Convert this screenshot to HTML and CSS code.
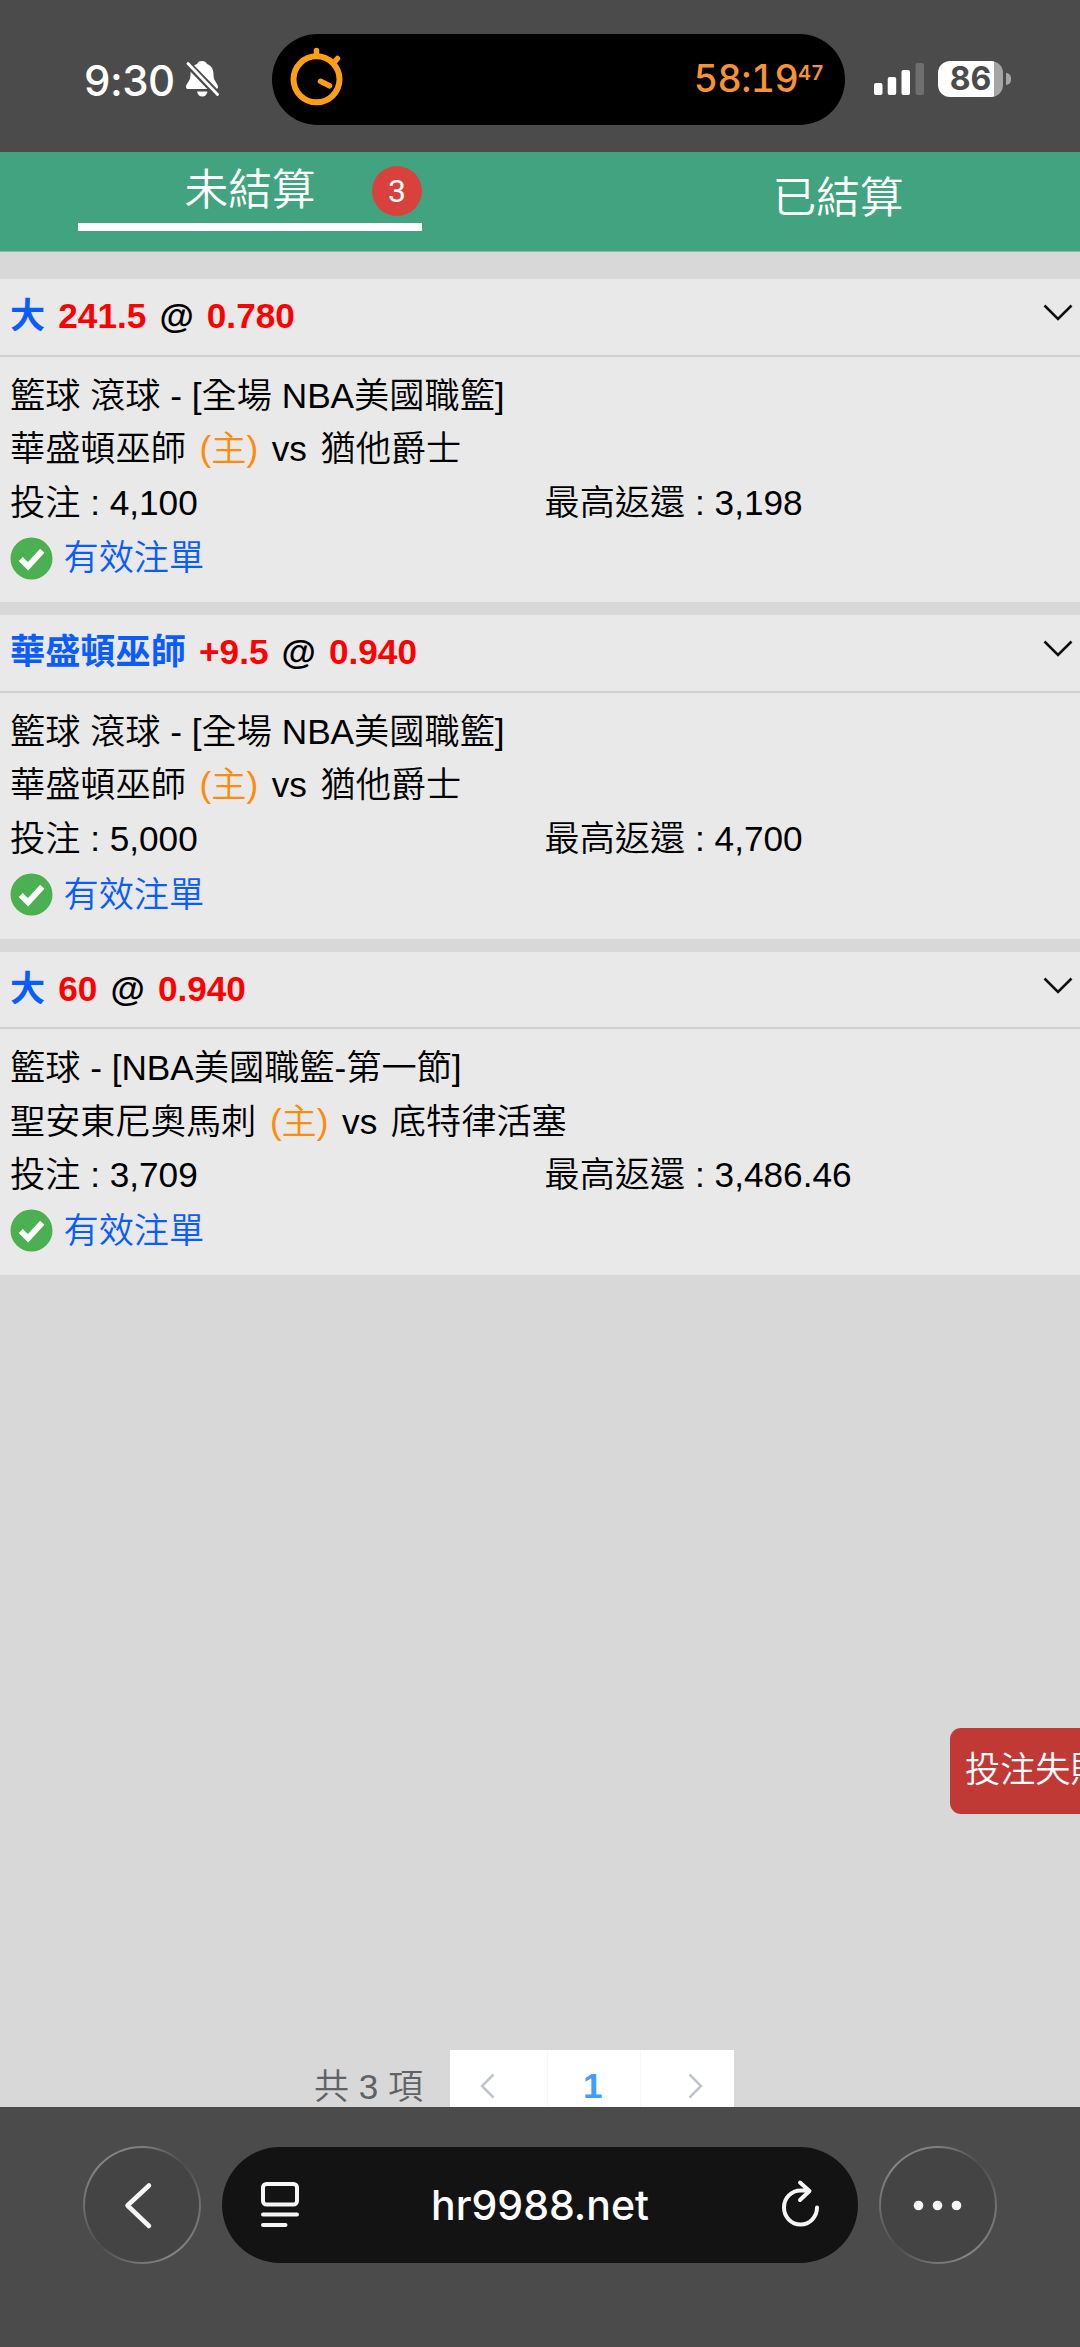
FILE: index.html
```
<!DOCTYPE html>
<html lang="zh-Hant">
<head>
  <meta charset="UTF-8">
  <title>投注記錄</title>
  <meta name="viewport" content="width=device-width, initial-scale=1.0">
  <link rel="stylesheet" href="styles.css">
</head>
<body>

<div class="screen">

  <!-- Status bar -->
  <header class="status-bar">
    <span class="clock">9:30</span>
    <svg class="bell" viewBox="0 0 33 36">
      <path d="M16 0c-3 0-4.500 1.500-5 3-5 2-6.500 6-6.500 10.500 0 7-4.500 9-4.500 12.500 0 1.500 1 2 2 2h28c1 0 2-.500 2-2 0-3.500-4.500-5.500-4.500-12.500C27.500 9 26 5 21 3c-.500-1.500-2-3-5-3z" fill="#fff"/>
      <path d="M11 30.500h10.500c-.500 3-2.500 5-5.200 5s-4.800-2-5.300-5z" fill="#fff"/>
      <path d="M-2 -1L33 35" stroke="#4b4b4b" stroke-width="7"/>
      <path d="M2 2.500L31.500 33.500" stroke="#fff" stroke-width="2.800" stroke-linecap="round"/>
    </svg>
    <div class="island">
      <svg class="stopwatch" viewBox="0 0 54 60">
        <g fill="none" stroke="#fc9f14" stroke-linecap="round">
          <circle cx="26.500" cy="33.300" r="23" stroke-width="6"/>
          <path d="M26.500 10V4.500M44.500 16l3-3.500" stroke-width="5.500"/>
          <path d="M30.500 35.300l9 4.500" stroke-width="5.500"/>
        </g>
      </svg>
      <span class="timer">58:19<small>47</small></span>
    </div>
    <svg class="signal" viewBox="0 0 50 32">
      <g fill="#fff">
        <rect x="0" y="20" width="8.500" height="12" rx="2"/>
        <rect x="13.700" y="14" width="8.500" height="18" rx="2"/>
        <rect x="27.500" y="7" width="8.500" height="25" rx="2"/>
        <rect x="41.500" y="0" width="8.500" height="32" rx="2" opacity=".2"/>
      </g>
    </svg>
    <div class="battery"><span>86</span></div>
    <i class="battery-tip"></i>
  </header>

  <nav class="tabs">
    <div class="tab active">
      <span class="tab-label">未結算<b class="badge">3</b></span>
    </div>
    <div class="tab"><span class="tab-label">已結算</span></div>
  </nav>

  <main class="content">

    <section class="bet">
      <div class="bet-head">
        <p><span class="pick">大</span> <span class="odds">241.5</span> @ <span class="odds">0.780</span></p>
        <svg class="chevron" viewBox="0 0 30 17"><path d="M1.500 1.500L15 15 28.500 1.500"/></svg>
      </div>
      <div class="bet-body">
        <p>籃球 滾球 - [全場 NBA美國職籃]</p>
        <p class="teams">華盛頓巫師 <span class="home">(主)</span> vs 猶他爵士</p>
        <div class="amounts"><p>投注 : 4,100</p><p>最高返還 : 3,198</p></div>
        <div class="state">
          <svg class="check" viewBox="0 0 44 44"><circle cx="22" cy="22" r="21.500"/><path d="M11 22.500l7.500 7.500 14.500-16"/></svg>
          有效注單
        </div>
      </div>
    </section>

    <section class="bet">
      <div class="bet-head">
        <p><span class="pick">華盛頓巫師</span> <span class="odds">+9.5</span> @ <span class="odds">0.940</span></p>
        <svg class="chevron" viewBox="0 0 30 17"><path d="M1.500 1.500L15 15 28.500 1.500"/></svg>
      </div>
      <div class="bet-body">
        <p>籃球 滾球 - [全場 NBA美國職籃]</p>
        <p class="teams">華盛頓巫師 <span class="home">(主)</span> vs 猶他爵士</p>
        <div class="amounts"><p>投注 : 5,000</p><p>最高返還 : 4,700</p></div>
        <div class="state">
          <svg class="check" viewBox="0 0 44 44"><circle cx="22" cy="22" r="21.500"/><path d="M11 22.500l7.500 7.500 14.500-16"/></svg>
          有效注單
        </div>
      </div>
    </section>

    <section class="bet">
      <div class="bet-head">
        <p><span class="pick">大</span> <span class="odds">60</span> @ <span class="odds">0.940</span></p>
        <svg class="chevron" viewBox="0 0 30 17"><path d="M1.500 1.500L15 15 28.500 1.500"/></svg>
      </div>
      <div class="bet-body">
        <p>籃球 - [NBA美國職籃-第一節]</p>
        <p class="teams">聖安東尼奧馬刺 <span class="home">(主)</span> vs 底特律活塞</p>
        <div class="amounts"><p>投注 : 3,709</p><p>最高返還 : 3,486.46</p></div>
        <div class="state">
          <svg class="check" viewBox="0 0 44 44"><circle cx="22" cy="22" r="21.500"/><path d="M11 22.500l7.500 7.500 14.500-16"/></svg>
          有效注單
        </div>
      </div>
    </section>

    <div class="pagination">
      <span class="total">共 3 項</span>
      <div class="pager">
        <span class="prev"><svg viewBox="0 0 15 26"><path d="M13.500 1.500L2 13l11.500 11.500"/></svg></span>
        <span class="num">1</span>
        <span class="next"><svg viewBox="0 0 15 26"><path d="M1.500 1.500L13 13 1.500 24.500"/></svg></span>
      </div>
    </div>

    <div class="toast">投注失敗</div>
  </main>

  <!-- Browser toolbar -->
  <footer class="toolbar">
    <div class="round">
      <svg width="118" height="118" viewBox="0 0 118 118"><path d="M66 39.500L44.500 59.500l21.500 20.500" stroke-width="4.500"/></svg>
    </div>
    <div class="address">
      <svg class="reader" viewBox="0 0 38 46">
        <rect x="2" y="2" width="34" height="20.500" rx="3.500"/>
        <path d="M2 32.500h34M2 43h22.500"/>
      </svg>
      <span>hr9988.net</span>
      <svg class="reload" viewBox="0 0 38 46">
        <path d="M36 25.500a16.500 17 0 1 1-16.500-17h8M19 .500l9.500 8.500-9.500 9"/>
      </svg>
    </div>
    <div class="round">
      <svg width="118" height="118" viewBox="0 0 118 118"><g class="dots"><circle cx="39.500" cy="59.500" r="4.800"/><circle cx="58.500" cy="59.500" r="4.800"/><circle cx="77.500" cy="59.500" r="4.800"/></g></svg>
    </div>
  </footer>

</div>

</body>
</html>
```
FILE: styles.css
```
* {
  box-sizing: border-box;
}

body {
  margin: 0;
  font-family: "Liberation Sans", "Noto Sans CJK TC", sans-serif;
  font-size: 35.2px;
  font-weight: 350;
  color: #000;
}

p {
  margin: 0;
}

svg {
  display: block;
  flex-shrink: 0;
  overflow: visible;
}

.screen {
  width: 1080px;
  height: 2347px;
  display: flex;
  flex-direction: column;
  overflow: hidden;
  background: #d8d8d8;
}

/* status bar */
.status-bar {
  height: 152px;
  flex-shrink: 0;
  display: flex;
  align-items: center;
  padding: 6px 0 0 84px;
  background: #4b4b4b;
  color: #fff;
  font-family: Inter, sans-serif;
}

.clock {
  width: 102px;
  padding-top: 2px;
  font-size: 42px;
  font-weight: 500;
  letter-spacing: -0.5px;
}

.bell {
  width: 33px;
  height: 36px;
  margin-right: 53px;
  overflow: hidden;
}

.island {
  width: 573px;
  height: 91px;
  border-radius: 46px;
  background: #000;
  display: flex;
  align-items: center;
  justify-content: space-between;
  padding: 0 21px 0 18px;
}

.stopwatch {
  width: 54px;
  height: 60px;
  margin-bottom: 7px;
}

.timer {
  display: flex;
  align-items: flex-start;
  font-size: 37.5px;
  font-weight: 450;
  line-height: 50px;
  letter-spacing: -0.6px;
  font-variant-numeric: tabular-nums;
  color: #f69335;
}

.timer small {
  font-size: 20px;
  font-weight: 600;
  line-height: 38px;
  letter-spacing: 0;
}

.signal {
  width: 50px;
  height: 32px;
  margin-left: 29px;
}

.battery {
  width: 65px;
  height: 36px;
  margin-left: 14px;
  border-radius: 12px;
  background: linear-gradient(to right, #fff 56px, #a5a5a5 56px);
  color: #4b4b4b;
  font-size: 32px;
  font-weight: 700;
  line-height: 36px;
  text-align: center;
}

.battery-tip {
  width: 5px;
  height: 12px;
  margin-left: 3px;
  border-radius: 0 5px 5px 0;
  background: #a5a5a5;
}

/* tabs */
.tabs {
  height: 100px;
  flex-shrink: 0;
  display: flex;
  justify-content: space-between;
  padding: 0 70px 0 78px;
  background: #41a380;
  border-bottom: 1px solid #7cc0a8;
  color: #fff;
  font-size: 43.7px;
}

.tab {
  width: 344px;
  height: 79px;
  line-height: 76px;
  padding-top: 8px;
  text-align: center;
}

.tab.active {
  padding-top: 0;
  border-bottom: 8px solid #fff;
}

.tab-label {
  display: block;
  position: relative;
}

.badge {
  position: absolute;
  top: 14px;
  right: 0;
  width: 50px;
  height: 50px;
  border-radius: 50%;
  background: #d9423c;
  font-family: Roboto, sans-serif;
  font-size: 32px;
  font-weight: 400;
  line-height: 50px;
}

/* bets */
.content {
  flex: 1;
  min-height: 0;
  display: flex;
  flex-direction: column;
  position: relative;
  overflow: hidden;
  padding-top: 27px;
}

.bet {
  height: 323.3px;
  flex-shrink: 0;
  margin-bottom: 13.2px;
  background: #e9e9e9;
}

.bet-head {
  height: 77.500px;
  display: flex;
  align-items: center;
  justify-content: space-between;
  padding: 0 7px 9px 10px;
  border-bottom: 2.500px solid #cfcfcf;
  font-weight: 700;
  word-spacing: 3.300px;
}

.pick {
  color: #0b5cff;
}

.odds {
  color: #fe0000;
}

.chevron {
  width: 30px;
  height: 17px;
  fill: none;
  stroke: #111;
  stroke-width: 2.600;
}

.bet-body {
  padding: 12px 10px 0;
  line-height: 53.5px;
}

.teams {
  word-spacing: 3.800px;
}

.home {
  color: #ff8a0c;
}

.amounts {
  display: grid;
  grid-template-columns: 534.500px 1fr;
}

.state {
  display: flex;
  align-items: center;
  gap: 11px;
  height: 58px;
  margin-left: -.500px;
  color: #0b5cff;
}

.check {
  width: 43px;
  height: 43px;
  fill: #4caf50;
}

.check path {
  fill: none;
  stroke: #fff;
  stroke-width: 6;
}

/* pagination */
.pagination {
  display: flex;
  align-items: center;
  height: 72px;
  margin: auto 0 -15.500px;
  padding-left: 314px;
  color: #606266;
}

.total {
  width: 135.500px;
  padding-bottom: 6px;
  font-size: 35px;
}

.pager {
  display: flex;
  height: 72px;
  background: #fff;
}

.pager span {
  display: flex;
  align-items: center;
  width: 93.500px;
}

.pager .prev {
  width: 97.500px;
  padding-left: 30px;
}

.pager .num {
  justify-content: center;
  padding-right: 2px;
  border: solid #f8f8f8;
  border-width: 0 1px;
  color: #409eff;
  font-weight: 700;
}

.pager .next {
  justify-content: flex-end;
  padding-right: 31px;
}

.pager svg {
  width: 15px;
  height: 26px;
  fill: none;
  stroke: #c0c4cc;
  stroke-width: 2.500;
}

.toast {
  position: absolute;
  top: 1476px;
  left: 950px;
  width: 173px;
  height: 86px;
  padding-left: 15px;
  border-radius: 11px;
  background: #c03935;
  color: #fff;
  line-height: 84px;
  white-space: nowrap;
}

/* browser toolbar */
.toolbar {
  height: 240.500px;
  flex-shrink: 0;
  display: flex;
  justify-content: center;
  gap: 21px;
  padding-top: 39px;
  background: #4b4b4b;
  color: #fff;
}

.toolbar svg {
  fill: none;
  stroke: #f5f5f5;
  stroke-width: 4;
  stroke-linecap: round;
  stroke-linejoin: round;
}

.round {
  width: 118px;
  height: 118px;
  border-radius: 50%;
  background:
    linear-gradient(#444, #444) padding-box,
    conic-gradient(#808080, #4d4d4d 45deg, #707070 90deg, #858585 150deg, #707070 190deg, #4d4d4d 225deg, #707070 270deg, #858585 310deg, #808080) border-box;
  border: 2px solid transparent;
}

.round svg {
  margin: -2px;
}

.toolbar .dots {
  fill: #f5f5f5;
  stroke: none;
}

.address {
  width: 636px;
  height: 116px;
  margin-top: 1px;
  padding: 0 39px;
  border-radius: 58px;
  background: #131313;
  display: flex;
  align-items: center;
  justify-content: space-between;
  font-family: Inter, sans-serif;
  font-size: 41px;
  font-weight: 500;
}

.reader,
.reload {
  width: 38px;
  height: 46px;
}
```
